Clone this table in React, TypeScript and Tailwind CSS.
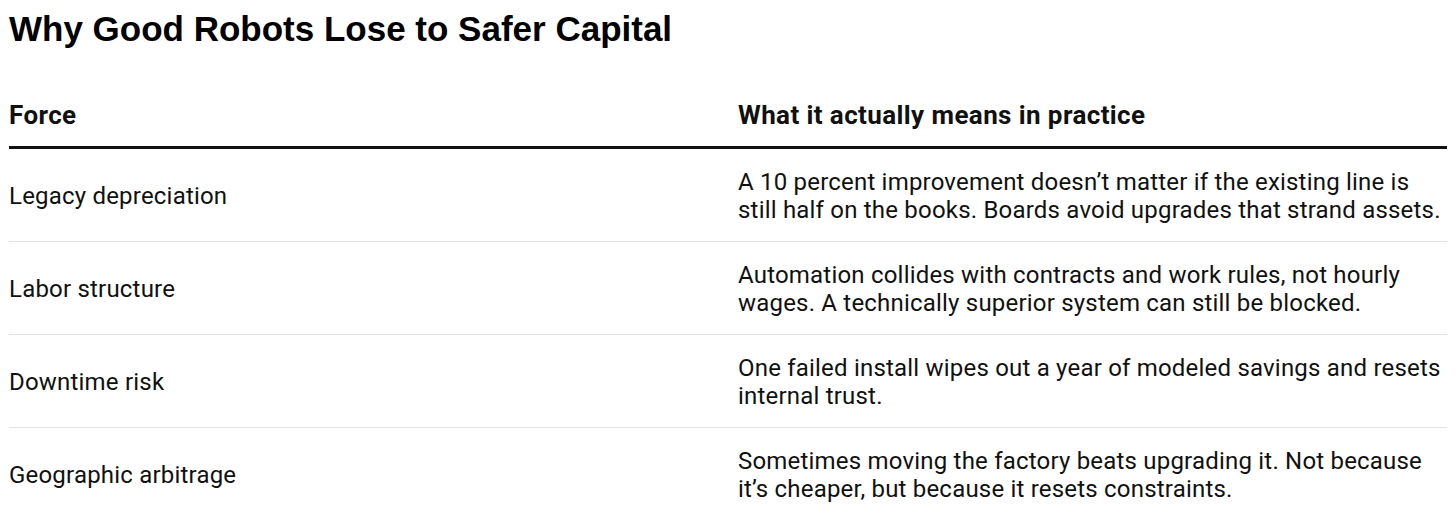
const rows = [
  {
    force: "Legacy depreciation",
    meaning:
      "A 10 percent improvement doesn\u2019t matter if the existing line is still half on the books. Boards avoid upgrades that strand assets.",
  },
  {
    force: "Labor structure",
    meaning:
      "Automation collides with contracts and work rules, not hourly wages. A technically superior system can still be blocked.",
  },
  {
    force: "Downtime risk",
    meaning:
      "One failed install wipes out a year of modeled savings and resets internal trust.",
  },
  {
    force: "Geographic arbitrage",
    meaning:
      "Sometimes moving the factory beats upgrading it. Not because it\u2019s cheaper, but because it resets constraints.",
  },
];

export default function App() {
  return (
    <div className="min-h-screen bg-white px-[9px] pt-[9px] text-[#111]">
      <h1 className="font-['Liberation_Sans',Arial,sans-serif] text-[35px] leading-[40px] font-bold text-black">
        Why Good Robots Lose to Safer Capital
      </h1>

      <div className="mt-[51px] font-['Roboto',sans-serif]">
        <div className="grid grid-cols-[729px_1fr] border-b-[3px] border-[#111] pb-[16px]">
          <div className="text-[26px] leading-[30px] font-bold tracking-[0.4px]">Force</div>
          <div className="text-[26px] leading-[30px] font-bold tracking-[0.4px]">
            What it actually means in practice
          </div>
        </div>

        {rows.map((r, i) => (
          <div
            key={r.force}
            className={
              i < rows.length - 1
                ? "grid grid-cols-[729px_1fr] items-center border-b border-[#e3e3e3] h-[93px]"
                : "grid grid-cols-[729px_1fr] items-center h-[93px]"
            }
          >
            <div className="text-[24px] leading-[28px] tracking-[0.2px] pt-px">{r.force}</div>
            <div className="text-[24px] leading-[28px] tracking-[0.2px] pt-px">{r.meaning}</div>
          </div>
        ))}
      </div>
    </div>
  );
}
